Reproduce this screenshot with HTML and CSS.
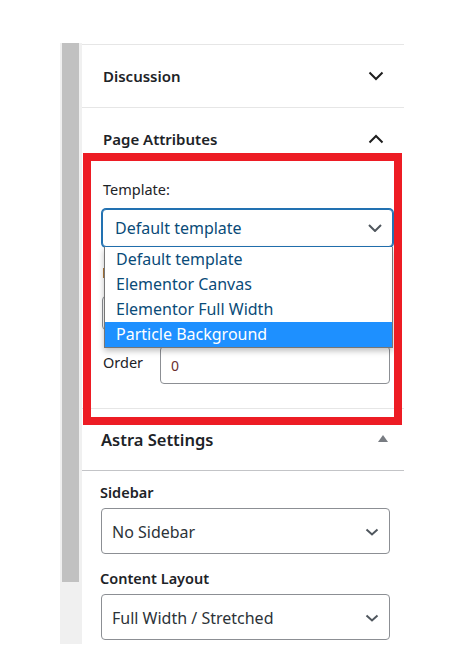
FILE: index.html
```html
<!DOCTYPE html>
<html lang="en">
<head>
<meta charset="utf-8">
<title>Page Attributes</title>
<link rel="stylesheet" href="styles.css">
</head>
<body>
<div class="screen">
  <div class="track"><div class="thumb"></div></div>
  <div class="panel">
    <section class="box">
      <div class="box-head">
        <h2 class="box-title">Discussion</h2>
        <svg class="toggle" width="16" height="10" viewBox="0 0 16 10"><path d="M1.5 1.5l6.5 6.5 6.5-6.5" fill="none" stroke="#1e1e1e" stroke-width="2"/></svg>
      </div>
    </section>
    <section class="box">
      <div class="box-head">
        <h2 class="box-title">Page Attributes</h2>
        <svg class="toggle" width="16" height="10" viewBox="0 0 16 10"><path d="M1.5 8.5l6.5-6.5 6.5 6.5" fill="none" stroke="#1e1e1e" stroke-width="2"/></svg>
      </div>
      <div class="box-body">
        <p class="wp-label">Template:</p>
        <div class="select-wrap">
          <div class="wp-select is-focused">
            <span>Default template</span>
            <svg class="caret" width="14" height="8" viewBox="0 0 14 8"><path d="M1 1l6 6 6-6" fill="none" stroke="#50575e" stroke-width="2"/></svg>
          </div>
          <ul class="dropdown">
            <li class="option">Default template</li>
            <li class="option">Elementor Canvas</li>
            <li class="option">Elementor Full Width</li>
            <li class="option is-active">Particle Background</li>
          </ul>
        </div>
        <div class="hidden-mark"></div>
        <div class="ghost-select"></div>
        <div class="order-row">
          <span class="order-label">Order</span>
          <div class="order-input">0</div>
        </div>
      </div>
    </section>
    <section class="astra">
      <div class="astra-head">
        <h2 class="astra-title">Astra Settings</h2>
        <svg class="tri" width="10" height="7" viewBox="0 0 10 7"><path d="M5 0L10 7H0z" fill="#787c82"/></svg>
      </div>
      <div class="astra-body">
        <p class="astra-label">Sidebar</p>
        <div class="astra-select">
          <span>No Sidebar</span>
          <svg class="caret" width="14" height="8" viewBox="0 0 14 8"><path d="M1.5 1.5l5.5 5 5.5-5" fill="none" stroke="#50575e" stroke-width="2"/></svg>
        </div>
        <p class="astra-label second">Content Layout</p>
        <div class="astra-select">
          <span>Full Width / Stretched</span>
          <svg class="caret" width="14" height="8" viewBox="0 0 14 8"><path d="M1.5 1.5l5.5 5 5.5-5" fill="none" stroke="#50575e" stroke-width="2"/></svg>
        </div>
      </div>
    </section>
  </div>
  <div class="annotation"></div>
</div>
</body>
</html>
```

FILE: styles.css
```css
* { box-sizing: border-box; }

body {
  margin: 0;
  background: #ffffff;
  font-family: "Noto Sans", "Open Sans", sans-serif;
  color: #1d2327;
}

.screen {
  position: relative;
  width: 455px;
  height: 667px;
  display: flex;
  align-items: flex-start;
  padding: 43px 0 0 60px;
}

.track {
  width: 22px;
  height: 601px;
  background: #f0f0f0;
  padding: 0 3px 0 2px;
  flex: none;
}

.thumb {
  height: 539px;
  background: #c1c1c1;
}

.panel {
  width: 322px;
  margin-top: 1px;
  border-top: 1px solid #e6e6e6;
  background: #fff;
}

.box {
  border-bottom: 1px solid #e6e6e6;
}

.box-head {
  height: 62px;
  display: flex;
  align-items: center;
  justify-content: space-between;
  padding: 0 20px 0 21px;
}

.box-title {
  margin: 0;
  font-size: 15px;
  font-weight: 600;
  line-height: 20px;
  color: #1d2327;
}

.toggle { display: block; }

.box-body {
  padding: 9px 11px 24px 20px;
}

.wp-label {
  margin: 0 0 10px 1px;
  font-size: 14.5px;
  line-height: 20px;
  color: #1d2327;
}

.hidden-mark {
  margin: 21px 0 0 1px;
  width: 2px;
  height: 10px;
  background: #b07a3a;
}

.select-wrap {
  position: relative;
}

.wp-select {
  height: 38px;
  border: 1px solid #8c8f94;
  border-radius: 4px;
  display: flex;
  align-items: center;
  justify-content: space-between;
  padding: 0 10px 0 12px;
  font-size: 16px;
  color: #2c3338;
  background: #fff;
}

.wp-select.is-focused {
  border-color: #2271b1;
  box-shadow: 0 0 0 1px #2271b1;
  color: #0a4b78;
}

.dropdown {
  position: absolute;
  top: 100%;
  left: 2px;
  right: 0;
  margin: 0;
  padding: 0;
  list-style: none;
  background: #fff;
  border: 1px solid #767676;
  border-top: 0;
  box-shadow: 0 3px 6px rgba(0, 0, 0, 0.25);
  z-index: 2;
}

.option {
  height: 25px;
  line-height: 25px;
  padding-left: 11px;
  font-size: 16px;
  color: #0a4b78;
}

.option.is-active {
  background: #1e90ff;
  color: #ffffff;
}

.ghost-select {
  margin-top: 18px;
  height: 34px;
  border: 1px solid #8c8f94;
  border-radius: 4px;
}

.order-row {
  margin-top: 16px;
  display: flex;
  align-items: flex-start;
}

.order-label {
  width: 58px;
  padding: 6px 0 0 1px;
  font-size: 14.5px;
  line-height: 20px;
  color: #1d2327;
}

.order-input {
  width: 230px;
  height: 38px;
  border: 1px solid #8c8f94;
  border-radius: 4px;
  padding: 9px 0 0 10px;
  font-size: 14px;
  line-height: 20px;
  color: #6b2f2f;
}

.astra-head {
  height: 62px;
  border-bottom: 1px solid #c3c4c7;
  display: flex;
  align-items: center;
  justify-content: space-between;
  padding: 0 16px 0 19px;
}

.astra-title {
  margin: 0;
  font-size: 16.5px;
  font-weight: 600;
  line-height: 20px;
  color: #1d2327;
}

.tri { display: block; margin-top: -2px; }

.astra-body {
  padding: 11px 14px 0 18px;
}

.astra-label {
  margin: 0 0 6px 0;
  font-size: 14.5px;
  font-weight: 600;
  line-height: 20px;
  color: #1d2327;
}

.astra-label.second { margin-top: 14px; }

.astra-select {
  margin-left: 1px;
  height: 46px;
  border: 1px solid #8c8f94;
  border-radius: 4px;
  display: flex;
  align-items: center;
  justify-content: space-between;
  padding: 2px 10px 0 10px;
  font-size: 16px;
  color: #2c3338;
}

.caret { display: block; }

.annotation {
  position: absolute;
  left: 83px;
  top: 153px;
  width: 319px;
  height: 272px;
  border: 8px solid #ed1c24;
  z-index: 3;
}
```
